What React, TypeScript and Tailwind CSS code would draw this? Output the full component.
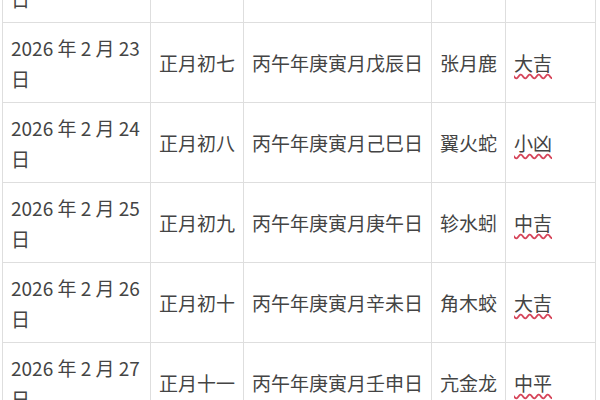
import React from "react";

type Row = { date: string; lunar: string; gz: string; star: string; luck: string };

const rows: Row[] = [
  { date: "2026 年 2 月 22 日", lunar: "正月初六", gz: "丙午年庚寅月丁卯日", star: "星日马", luck: "中吉" },
  { date: "2026 年 2 月 23 日", lunar: "正月初七", gz: "丙午年庚寅月戊辰日", star: "张月鹿", luck: "大吉" },
  { date: "2026 年 2 月 24 日", lunar: "正月初八", gz: "丙午年庚寅月己巳日", star: "翼火蛇", luck: "小凶" },
  { date: "2026 年 2 月 25 日", lunar: "正月初九", gz: "丙午年庚寅月庚午日", star: "轸水蚓", luck: "中吉" },
  { date: "2026 年 2 月 26 日", lunar: "正月初十", gz: "丙午年庚寅月辛未日", star: "角木蛟", luck: "大吉" },
  { date: "2026 年 2 月 27 日", lunar: "正月十一", gz: "丙午年庚寅月壬申日", star: "亢金龙", luck: "中平" },
];

export default function App() {
  return (
    <div
      className="w-[600px] h-[400px] overflow-hidden bg-white text-[#444444]"
      style={{ fontFamily: '"Noto Sans CJK SC", "Noto Sans", sans-serif' }}
    >
      <div className="-mt-[58px] ml-[2px]">
        <table className="table-fixed border-collapse w-[593px] text-[19px] leading-[31px]">
          <colgroup>
            <col className="w-[148px]" />
            <col className="w-[93px]" />
            <col className="w-[188px]" />
            <col className="w-[74px]" />
            <col className="w-[90px]" />
          </colgroup>
          <tbody>
            {rows.map((r) => (
              <tr key={r.date} className="h-[80px]">
                <td className="border border-[#dedede] px-2 align-middle">{r.date}</td>
                <td className="border border-[#dedede] px-2 align-middle whitespace-nowrap">{r.lunar}</td>
                <td className="border border-[#dedede] px-2 align-middle whitespace-nowrap">{r.gz}</td>
                <td className="border border-[#dedede] px-2 align-middle whitespace-nowrap">{r.star}</td>
                <td className="border border-[#dedede] px-2 align-middle whitespace-nowrap">
                  <span className="underline decoration-wavy decoration-[#d6455a] underline-offset-[2px]">
                    {r.luck}
                  </span>
                </td>
              </tr>
            ))}
          </tbody>
        </table>
      </div>
    </div>
  );
}
